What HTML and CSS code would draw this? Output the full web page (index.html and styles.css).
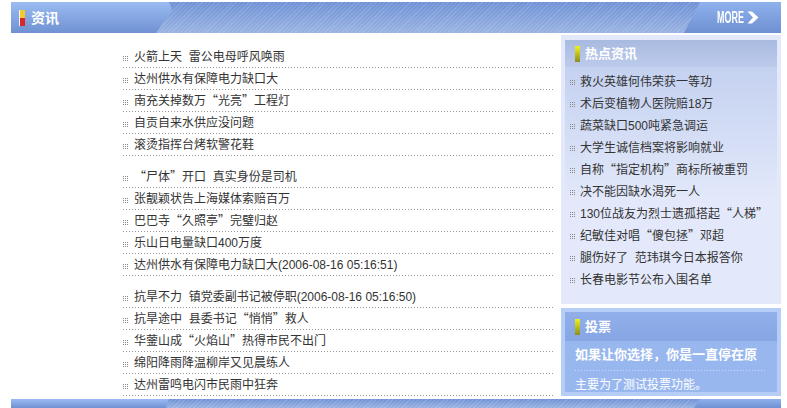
FILE: index.html
```html
<!DOCTYPE html>
<html lang="zh">
<head>
<meta charset="utf-8">
<title>资讯</title>
<link rel="stylesheet" href="styles.css">
</head>
<body>
<div class="page">
  <header class="band">
    <div class="band-left">
      <svg class="flag" width="6" height="16" viewBox="0 0 6 16"><rect width="6" height="16" fill="#f4f4f4"/><rect x="1" width="5" height="8" fill="#f5c92a"/><rect x="1" y="8" width="5" height="8" fill="#d9262a"/></svg>
      <span class="band-title">资讯</span>
    </div>
    <div class="band-right">
      <span class="more">MORE</span>
      <svg width="12" height="13" viewBox="0 0 12 13"><path d="M0.5 0.5h4.5L11.5 6.5 5 12.5H0.5L6 6.5z" fill="#fff"/></svg>
    </div>
  </header>
  <div class="body">
    <main class="news">
      <ul class="group">
        <li>火箭上天&nbsp; 雷公电母呼风唤雨</li>
        <li>达州供水有保障电力缺口大</li>
        <li>南充关掉数万<span class="q">“</span>光亮<span class="q">”</span>工程灯</li>
        <li>自贡自来水供应没问题</li>
        <li>滚烫指挥台烤软警花鞋</li>
      </ul>
      <ul class="group">
        <li><span class="q">“</span>尸体<span class="q">”</span>开口&nbsp; 真实身份是司机</li>
        <li>张靓颖状告上海媒体索赔百万</li>
        <li>巴巴寺<span class="q">“</span>久照亭<span class="q">”</span>完璧归赵</li>
        <li>乐山日电量缺口400万度</li>
        <li>达州供水有保障电力缺口大(2006-08-16 05:16:51)</li>
      </ul>
      <ul class="group">
        <li>抗旱不力&nbsp; 镇党委副书记被停职(2006-08-16 05:16:50)</li>
        <li>抗旱途中&nbsp; 县委书记<span class="q">“</span>悄悄<span class="q">”</span>救人</li>
        <li>华蓥山成<span class="q">“</span>火焰山<span class="q">”</span>热得市民不出门</li>
        <li>绵阳降雨降温柳岸又见晨练人</li>
        <li>达州雷鸣电闪市民雨中狂奔</li>
      </ul>
    </main>
    <aside class="side">
      <section class="hot">
        <h2 class="hot-head"><svg class="tick" width="5" height="16" viewBox="0 0 5 16"><defs><linearGradient id="t1" x1="0" y1="0" x2="0" y2="1"><stop offset="0" stop-color="#f2f21a"/><stop offset="1" stop-color="#8c8c20"/></linearGradient></defs><rect width="5" height="16" fill="url(#t1)"/></svg>热点资讯</h2>
        <ul class="hot-list">
          <li>救火英雄何伟荣获一等功</li>
          <li>术后变植物人医院赔18万</li>
          <li>蔬菜缺口500吨紧急调运</li>
          <li>大学生诚信档案将影响就业</li>
          <li>自称<span class="q">“</span>指定机构<span class="q">”</span>商标所被重罚</li>
          <li>决不能因缺水渴死一人</li>
          <li>130位战友为烈士遗孤搭起<span class="q">“</span>人梯<span class="q">”</span></li>
          <li>纪敏佳对唱<span class="q">“</span>傻包拯<span class="q">”</span>邓超</li>
          <li>腿伤好了&nbsp; 范玮琪今日本报答你</li>
          <li>长春电影节公布入围名单</li>
        </ul>
      </section>
      <section class="vote">
        <div class="vote-inner">
          <h2 class="vote-head"><svg class="tick" width="5" height="16" viewBox="0 0 5 16"><defs><linearGradient id="t2" x1="0" y1="0" x2="0" y2="1"><stop offset="0" stop-color="#f2f21a"/><stop offset="1" stop-color="#8c8c20"/></linearGradient></defs><rect width="5" height="16" fill="url(#t2)"/></svg>投票</h2>
          <p class="vote-q">如果让你选择，你是一直停在原</p>
          <p class="vote-note">主要为了测试投票功能。</p>
        </div>
      </section>
    </aside>
  </div>
  <footer class="band band-foot">
    <div class="band-left"></div>
    <div class="band-right"></div>
  </footer>
</div>
</body>
</html>
```
FILE: styles.css
```css
html, body { margin: 0; padding: 0; background: #fff; }
body { font: 12px/22px "Liberation Sans", "Noto Sans CJK SC", sans-serif; color: #333; overflow: hidden; height: 408px; }
ul { list-style: none; margin: 0; padding: 0; }
h2, p { margin: 0; }
.q { font-family: "Noto Sans CJK SC", sans-serif; line-height: 0; }

.page { width: 770px; margin-left: 11px; padding-top: 2px; }

.band {
  height: 31px;
  display: flex;
  justify-content: space-between;
  background:
    repeating-linear-gradient(135deg, rgba(255,255,255,.12) 0 1px, transparent 1px 3px),
    linear-gradient(#7093d6, #9ab3e2);
}
.band-left {
  width: 162px;
  display: flex;
  align-items: center;
  padding-left: 8px;
  box-sizing: border-box;
  background: linear-gradient(#9abcf2, #7091d2);
  clip-path: polygon(0 0, 158px 0, 161px 8px, 145px 100%, 0 100%);
}
.flag { margin-right: 6px; }
.band-title { color: #fff; font-size: 14px; font-weight: bold; }
.band-right {
  width: 97px;
  display: flex;
  align-items: center;
  padding-left: 33px;
  box-sizing: border-box;
  background: linear-gradient(#8fb1ec, #6f90d2);
  clip-path: polygon(16px 0, 100% 0, 100% 100%, 0 100%);
}
.more {
  width: 27px;
  margin-right: 3px;
  color: #fff;
  font: bold 16px/1 "Liberation Sans", sans-serif;
  white-space: nowrap;
  transform: scaleX(.56);
  transform-origin: left center;
}

.body { display: flex; height: 364px; }
.news { width: 550px; padding: 13px 0 0 112px; box-sizing: border-box; }
.group { margin-bottom: 10px; width: 432px; }
.group li {
  height: 22px;
  line-height: 23px;
  padding-left: 11px;
  box-sizing: border-box;
  position: relative;
  background: repeating-linear-gradient(90deg, #999 0 1px, transparent 1px 3px) left bottom / 100% 1px no-repeat;
}
.group li::before, .hot-list li::before {
  content: "";
  position: absolute;
  left: 0;
  top: 10px;
  width: 6px;
  height: 6px;
  background: repeating-linear-gradient(90deg, #888 0 1px, transparent 1px 2px);
  -webkit-mask: repeating-linear-gradient(#000 0 1px, transparent 1px 2px);
  mask: repeating-linear-gradient(#000 0 1px, transparent 1px 2px);
}
.side { width: 220px; padding-top: 2px; display: flex; flex-direction: column; gap: 4px; }

.hot { height: 269px; padding: 5px 4px 4px; box-sizing: border-box; background: #e3e9fa; }
.hot-head {
  height: 27px;
  padding-left: 10px;
  display: flex;
  align-items: center;
  gap: 5px;
  color: #fff;
  font-size: 13px;
  background: linear-gradient(#a9bae0, #bccbec);
}
.hot-list { background: linear-gradient(#c4d1f0, #e3e9fa 60%); padding: 4px 0 0 5px; }
.hot-list li { height: 22px; position: relative; padding-left: 10px; color: #333; }
.hot-list li::before { top: 9px; }

.vote { height: 88px; padding: 4px; box-sizing: border-box; background: #b6cdf5; }
.vote-inner { height: 80px; background: #98b7ee; color: #fff; overflow: hidden; }
.vote-head {
  height: 29px;
  padding-left: 10px;
  display: flex;
  align-items: center;
  gap: 5px;
  font-size: 13px;
  background: linear-gradient(#91b0ea, #86a6e4);
}
.vote-q { font-size: 13px; font-weight: bold; padding: 3px 0 0 10px; line-height: 22px; height: 29px; box-sizing: border-box; white-space: nowrap; }
.vote-note { margin: 0 10px; padding-top: 4px; line-height: 22px; background: repeating-linear-gradient(90deg, #cbdaf5 0 1px, transparent 1px 3px) left top / 100% 1px no-repeat; }

.band-foot { height: 9px; margin-top: 2px; }
.band-foot .band-left { clip-path: polygon(0 0, 158px 0, 155px 100%, 0 100%); }
.band-foot .band-right { clip-path: polygon(16px 0, 100% 0, 100% 100%, 10px 100%); }
```
